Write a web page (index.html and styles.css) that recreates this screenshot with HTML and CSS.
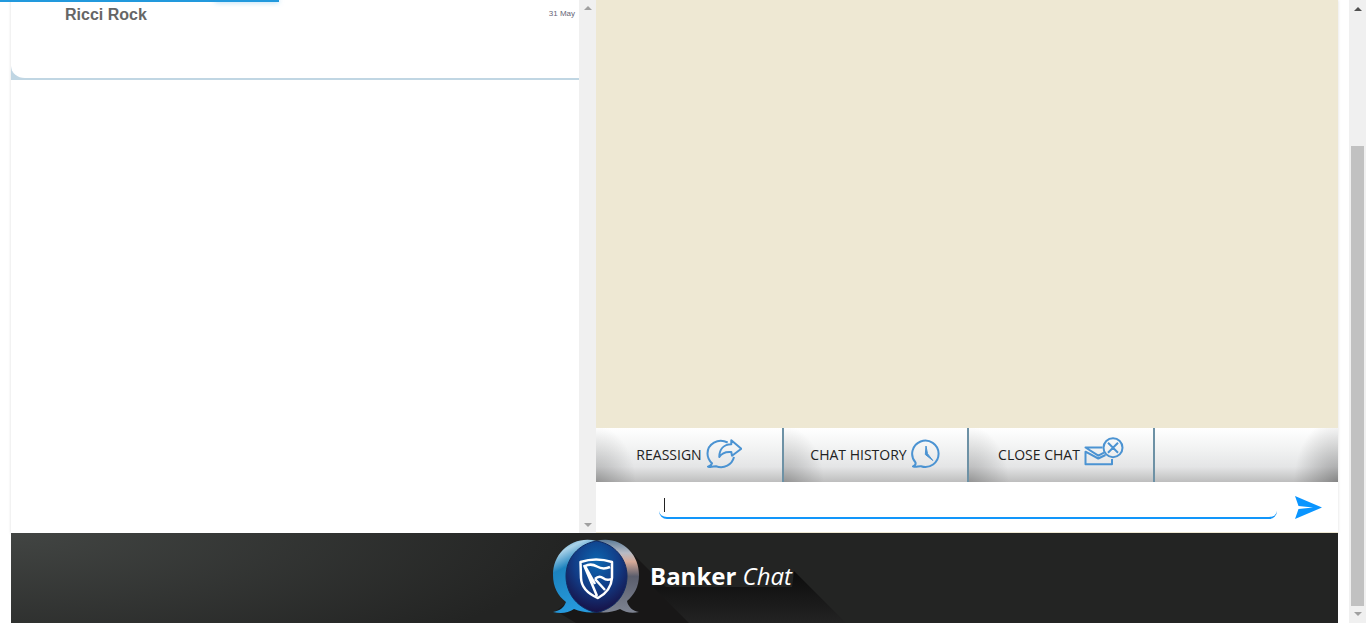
FILE: index.html
```html
<!DOCTYPE html>
<html lang="en">
<head>
<meta charset="utf-8">
<title>Banker Chat</title>
<link rel="stylesheet" href="styles.css">
</head>
<body>
<div class="progress"></div>
<div class="page">
  <div class="app">
    <main class="panels">
      <section class="contacts">
        <div class="contact-list">
          <div class="contact-wrap">
            <article class="contact">
              <h2 class="contact-name">Ricci Rock</h2>
              <time class="contact-date">31 May</time>
            </article>
          </div>
        </div>
        <div class="scroll scroll-inner"><i class="arrow up"></i><i class="arrow down"></i></div>
      </section>
      <section class="chat">
        <div class="messages"></div>
        <div class="toolbar">
          <button class="tool" type="button">REASSIGN
            <svg class="icon" width="36" height="30" viewBox="0 0 36 30"><path d="M21.700 3.500C12-1.500 1.500 5 1.500 14.500C1.500 19 3.500 22 6 24.200C5.500 26 4 27 2 27.600C5 29 8 27 10 27.200C18 30 26 26 28 18"/><path d="M25.300 1.300L35.300 9.700L26 16.700L25.300 13C20 12.500 16 13.500 13.300 18C13.300 10 18 5.500 25.300 5.300Z"/></svg>
          </button>
          <button class="tool" type="button">CHAT HISTORY
            <svg class="icon" width="30" height="30" viewBox="0 0 30 30"><path d="M4.500 23.500A13.200 13.200 0 1 1 10 27.200C7 27 5 28.800 2 27.400C4 26.600 5 25.500 4.500 23.500Z"/><path class="solid" d="M15 7L14.300 15.500L21.800 21.500L16.500 14.700Z"/></svg>
          </button>
          <button class="tool" type="button">CLOSE CHAT
            <svg class="icon" width="40" height="34" viewBox="0 0 40 34"><circle cx="29" cy="10.700" r="9.500"/><path d="M24 5.700L34 15.700M34 5.700L24 15.700M18.500 10.500H1.500L14.300 18.700L20 15.700M28 22V27.300H1.500V14.700L14.300 21.500L21.500 18"/></svg>
          </button>
          <span class="tool-end"></span>
        </div>
        <form class="composer">
          <div class="field">
            <input class="message" type="text" aria-label="Message">
            <span class="caret"></span>
          </div>
          <button class="send" type="button" aria-label="Send">
            <svg width="27" height="23" viewBox="0 0 27 23"><path d="M0 0L27 11.500L0 23L3.500 13L18 11.500L3.500 10Z"/></svg>
          </button>
        </form>
      </section>
    </main>
    <footer class="brand">
      <svg class="shadow" viewBox="0 0 300 90" width="300" height="90" aria-hidden="true">
        <defs><linearGradient id="fade" x1="0" y1="0" x2="0" y2="1"><stop offset="0" stop-color="#0c0c0c"/><stop offset="1" stop-color="#232323"/></linearGradient></defs>
        <path d="M80 20L150 90H24L4 78Z" fill="#181717"/>
        <path d="M101 54L240 54L242 38L294 90H137Z" fill="url(#fade)"/>
      </svg>
      <svg class="logo" width="90" height="78" viewBox="0 0 90 78" role="img" aria-label="Standard Bank">
        <defs>
          <linearGradient id="lb" x1="0" y1="0" x2="0.300" y2="1"><stop offset="0" stop-color="#2a7fb4"/><stop offset=".2" stop-color="#a9d2e8"/><stop offset=".42" stop-color="#1c82be"/><stop offset="1" stop-color="#2699dc"/></linearGradient>
          <linearGradient id="rb" x1="0" y1="0" x2="0" y2="1"><stop offset="0" stop-color="#5c7c98"/><stop offset=".18" stop-color="#b8bcc5"/><stop offset=".3" stop-color="#d7aa98"/><stop offset=".5" stop-color="#5a5d6c"/><stop offset="1" stop-color="#7e8492"/></linearGradient>
          <radialGradient id="cb" cx=".5" cy=".3" r=".68"><stop offset="0" stop-color="#0c66b0"/><stop offset=".55" stop-color="#123c86"/><stop offset="1" stop-color="#171349"/></radialGradient>
        </defs>
        <path d="M44 3C67 -3 87 14 87 37C87 49 82 57 75 63C76 69 81 73 87 74C79 76 73 74 68 71C61 74 54 75 45 74Z" fill="url(#rb)"/>
        <path d="M45 3C21 -3 1 14 1 37C1 49 6 58 14 64C12 70 7 73 1 74C9 76 16 75 22 71C29 74 37 75 45 74Z" fill="url(#lb)"/>
        <path d="M44.500 3C63 6 75 21 75 38C75 56 63 71 44.500 74.500C26 71 14 56 14 38C14 21 26 6 44.500 3Z" fill="url(#cb)" stroke="#102a62"/>
        <path d="M28.500 24Q44 19 60 24V40Q59 53 46 60Q29.500 53 29 40ZM32 27L45 58M33 28Q39 25 45 28.500T58 29M33 28L43 46M43 41Q47 37 51 40T59 41M43 41L53 52" fill="none" stroke="#fff" stroke-width="2.500" stroke-linejoin="round"/>
      </svg>
      <p class="brand-name"><strong>Banker</strong> <em>Chat</em></p>
    </footer>
  </div>
</div>
<div class="scroll scroll-page"><i class="arrow up"></i><div class="thumb"></div><i class="arrow down"></i></div>
</body>
</html>
```
FILE: styles.css
```css
* { box-sizing: border-box; }
body {
  margin: 0;
  display: flex;
  height: 100vh;
  overflow: hidden;
  background: #fff;
  font-family: "Liberation Sans", Arial, sans-serif;
}
.progress {
  position: absolute;
  top: 0;
  left: 0;
  z-index: 2;
  width: 279px;
  height: 2px;
  background: #2299dd;
}
.progress::after {
  content: "";
  position: absolute;
  right: 0;
  width: 64px;
  height: 2px;
  background: #2299dd;
  box-shadow: 0 0 5px #2299dd99;
}
.page { flex: 1; padding: 0 11px; }
.app { display: flex; flex-direction: column; height: 100%; }
.panels { flex: 1; display: flex; box-shadow: 0 0 3px #00000024; }
.contacts { flex: 585; display: flex; background: #fff; }
.contact-list { flex: 1; }
.contact-wrap { background: #c0d6e3; }
.contact {
  display: flex;
  justify-content: space-between;
  height: 80px;
  padding: 5px 4px 0 54px;
  background: #fff;
  border-bottom: 2px solid #c0d6e3;
  border-bottom-left-radius: 14px;
}
.contact-name { margin: 0; font-size: 16px; line-height: 20px; color: #666; }
.contact-date { font-size: 8px; line-height: 18px; color: #667; }
.scroll { display: flex; flex-direction: column; align-items: center; width: 17px; background: #f0f0f0; }
.scroll-inner { justify-content: space-between; padding: 6px 0; color: #a0a0a0; }
.scroll-page { padding: 7px 0; color: #505050; }
.scroll-page .down { color: #a0a0a0; margin-top: 6px; }
.thumb { flex: 1; width: 13px; margin-top: 135px; background: #c1c1c1; }
.arrow { width: 0; height: 0; border: 4px solid transparent; }
.up { border-top: 0; border-bottom-color: currentColor; }
.down { border-bottom: 0; border-top-color: currentColor; }
.chat { flex: 742; display: flex; flex-direction: column; background: #eee8d3; }
.messages { flex: 1; }
.toolbar {
  display: grid;
  grid-template-columns: 188fr 185fr 186fr 183fr;
  height: 54px;
  background: #fff;
}
.tool, .tool-end {
  border: 0;
  background:
    radial-gradient(ellipse 40px 56px at 0 100%, #00000038, #0000),
    linear-gradient(#fff, #f1f2f2 40%, #e4e5e6 72%, #bebebe);
}
.tool {
  display: flex;
  align-items: center;
  justify-content: center;
  gap: 4px;
  padding: 0 0 2px;
  border-right: 2px solid #6d91a5;
  color: #222;
  font: 14px "Open Sans", "Noto Sans", sans-serif;
}
.tool-end {
  background:
    radial-gradient(ellipse 44px 64px at 100% 100%, #0000004d, #0000),
    linear-gradient(#fff, #f1f2f2 40%, #e4e5e6 72%, #bebebe);
}
.icon { fill: none; stroke: #4b93d2; stroke-width: 2; stroke-linejoin: round; }
.solid { fill: #4b93d2; stroke-width: 1; }
.composer {
  display: flex;
  align-items: center;
  gap: 18px;
  height: 50px;
  margin-bottom: 1px;
  padding: 0 16px 0 63px;
  background: #fff;
}
.field { position: relative; flex: 1; }
.message {
  display: block;
  width: 100%;
  height: 24px;
  padding: 0 6px;
  border: 0 solid #1296fa;
  border-bottom-width: 2px;
  border-radius: 0 0 8px 8px;
  outline: 0;
  background: none;
  font: 14px "Liberation Sans", Arial, sans-serif;
}
.caret { position: absolute; left: 5px; top: 3px; width: 1px; height: 14px; background: #222; }
.send { display: flex; padding: 0; border: 0; background: none; fill: #0a95ff; }
.brand {
  position: relative;
  display: flex;
  align-items: flex-start;
  gap: 8px;
  height: 90px;
  padding: 5px 0 0 541px;
  background: radial-gradient(ellipse 560px 150px at 0 0, #424543, #232423);
}
.shadow { position: absolute; left: 541px; top: 0; }
.logo, .brand-name { position: relative; }
.brand-name {
  margin: 0;
  padding-top: 20px;
  color: #fff;
  font: 24px/36px "Open Sans", "Noto Sans", sans-serif;
}
```
